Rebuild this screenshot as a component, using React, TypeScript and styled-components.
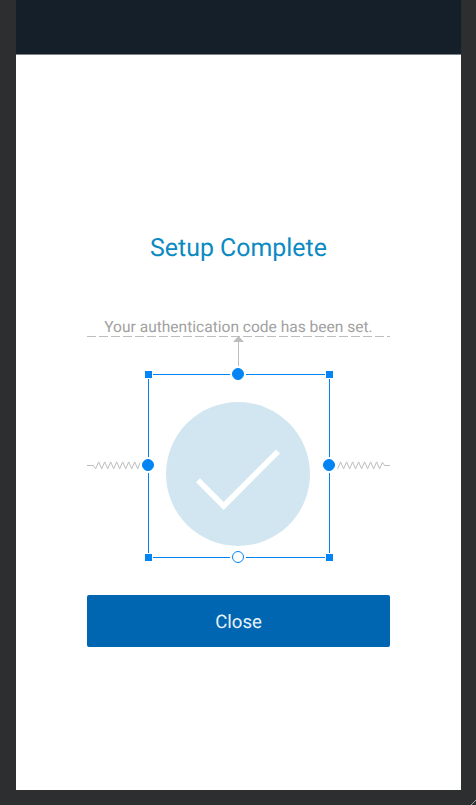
import React from "react";
import styled, { createGlobalStyle } from "styled-components";

const GlobalStyle = createGlobalStyle`
  * { box-sizing: border-box; }
  body { margin: 0; background: #2d2e30; font-family: Roboto, sans-serif; }
`;

const Canvas = styled.div`
  position: relative;
  height: 805px;
  padding: 0 15px 15px 16px;
  overflow: hidden;
  background: #2d2e30;
`;

const Screen = styled.main`
  height: 790px;
  display: flex;
  flex-direction: column;
  align-items: center;
  background: #fff;
`;

const AppBar = styled.header`
  align-self: stretch;
  height: 55px;
  background: #151f2a;
  border-bottom: 1px solid #7c838b;
`;

const Content = styled.section`
  width: 303px;
  display: flex;
  flex-direction: column;
  align-items: center;
  padding-top: 178px;
`;

const Title = styled.h1`
  margin: 0;
  font-size: 24.9px;
  line-height: 32px;
  font-weight: 400;
  color: #0b8ac2;
  white-space: nowrap;
  text-rendering: geometricPrecision;
`;

const Message = styled.p`
  margin: 53px 0 0;
  font-size: 15.55px;
  line-height: 18px;
  color: #a1a1a1;
  white-space: nowrap;
  text-rendering: geometricPrecision;
`;

/* The guides, badge and selection share one grid cell so they stack. */
const Stage = styled.div`
  display: grid;
  justify-items: start;
  width: 303px;
  height: 259px;
  & > * {
    grid-area: 1 / 1;
  }
`;

const Badge = styled.svg`
  width: 144px;
  height: 144px;
  margin: 66px 0 0 79px;
`;

const Guides = styled.svg`
  display: block;
`;

const Selection = styled.div`
  position: relative;
  width: 190px;
  height: 192px;
  margin: 34px 0 0 57px;
  display: grid;
  grid-template: 9px 1fr 9px / 9px 1fr 9px;
  place-items: center;
  &::before {
    content: "";
    position: absolute;
    inset: 4px;
    border: 1px solid #0284f0;
  }
`;

const CornerHandle = styled.span`
  z-index: 1;
  width: 9px;
  height: 9px;
  background: #0284f5;
  border: 1px solid #fff;
`;

const AnchorHandle = styled.span<{ $side: "row" | "column"; $open?: boolean }>`
  z-index: 1;
  display: grid;
  width: 16px;
  height: 16px;
  padding: 2px;
  margin: ${(p) => (p.$side === "row" ? "0 1px 2px 0" : "0 2px 1px 0")};
  border-radius: 50%;
  background: #fff;
  &::after {
    content: "";
    border-radius: 50%;
    border: 1px solid #0284f5;
    background: ${(p) => (p.$open ? "#fff" : "#0284f5")};
  }
`;

const CloseButton = styled.button`
  width: 303px;
  height: 52px;
  padding: 2px 0 0;
  border: 0;
  border-radius: 2px;
  background: #0066b2;
  color: #e8f2f9;
  font: 400 18.6px/24px Roboto, sans-serif;
  text-rendering: geometricPrecision;
`;

const Grip = styled.svg`
  position: absolute;
  right: 0;
  bottom: 0;
`;

const spring = (start: number, dir: 1 | -1) => {
  let d = "";
  for (let i = 0; i < 15; i++) {
    d += ` L${start + dir * i * 3} ${i % 2 === 0 ? 132.8 : 125.9}`;
  }
  return d;
};

export default function App() {
  return (
    <Canvas>
      <GlobalStyle />
      <Screen>
        <AppBar />
        <Content>
          <Title>Setup Complete</Title>
          <Message>Your authentication code has been set.</Message>
          <Stage>
            <Badge viewBox="0 0 144 144">
              <circle cx="72" cy="72" r="72" fill="#d1e6f1" />
              <path d="M32 78.3 57.6 104 112 49.4" fill="none" stroke="#fff" strokeWidth="5.6" />
            </Badge>
            <Guides width="303" height="227" fill="none" stroke="#bdbdbd">
              <path d="M0 .5H303" strokeDasharray="9 3" />
              <path d="M151.5 5V30" />
              <path d="M151.5 0 157 6H146Z" fill="#bdbdbd" stroke="none" />
              <path d={`M0 129.5H6.5${spring(8.7, 1)} L53.2 126.3`} />
              <path d={`M303 129.5H297.5L295.5 126.3${spring(292.6, -1)}`} />
            </Guides>
            <Selection>
              <CornerHandle />
              <AnchorHandle $side="column" />
              <CornerHandle />
              <AnchorHandle $side="row" />
              <span />
              <AnchorHandle $side="row" />
              <CornerHandle />
              <AnchorHandle $side="column" $open />
              <CornerHandle />
            </Selection>
          </Stage>
          <CloseButton>Close</CloseButton>
        </Content>
      </Screen>
      <Grip width="6" height="6" fill="none" stroke="#a0a0a0">
        <path d="M1 6 6 1" />
      </Grip>
    </Canvas>
  );
}
